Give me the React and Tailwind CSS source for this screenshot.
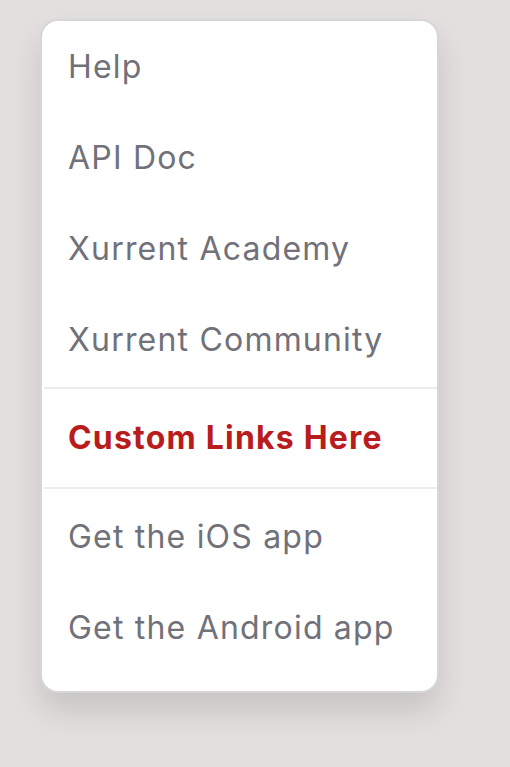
import React from 'react';

const Item = ({ children, className = '' }) => (
  <a href="#" className={`flex items-center h-[91px] px-[26px] text-[32px] leading-none tracking-[1.2px] text-[#71717a] ${className}`}>
    {children}
  </a>
);

const Divider = () => <div className="h-[2px] ml-[2px] bg-[#ececee]" />;

export default function App() {
  return (
    <div className="min-h-[767px] bg-[#e3dfdf] pt-[19px] pl-[40px]" style={{ fontFamily: 'Inter, "Noto Sans", sans-serif' }}>
      <nav className="w-[399px] bg-white border-2 border-[#d6d6da] rounded-[18px] shadow-[0_18px_30px_rgba(0,0,0,0.12)] overflow-hidden">
        <div className="pb-[2px]">
          <Item>Help</Item>
          <Item>API Doc</Item>
          <Item>Xurrent Academy</Item>
          <Item>Xurrent Community</Item>
        </div>
        <Divider />
        <div className="py-[3px]">
          <Item className="!h-[92px] font-bold !text-[#b91c1c]">Custom Links Here</Item>
        </div>
        <Divider />
        <div className="pt-[2px] pb-[18px]">
          <Item>Get the iOS app</Item>
          <Item>Get the Android app</Item>
        </div>
      </nav>
    </div>
  );
}
